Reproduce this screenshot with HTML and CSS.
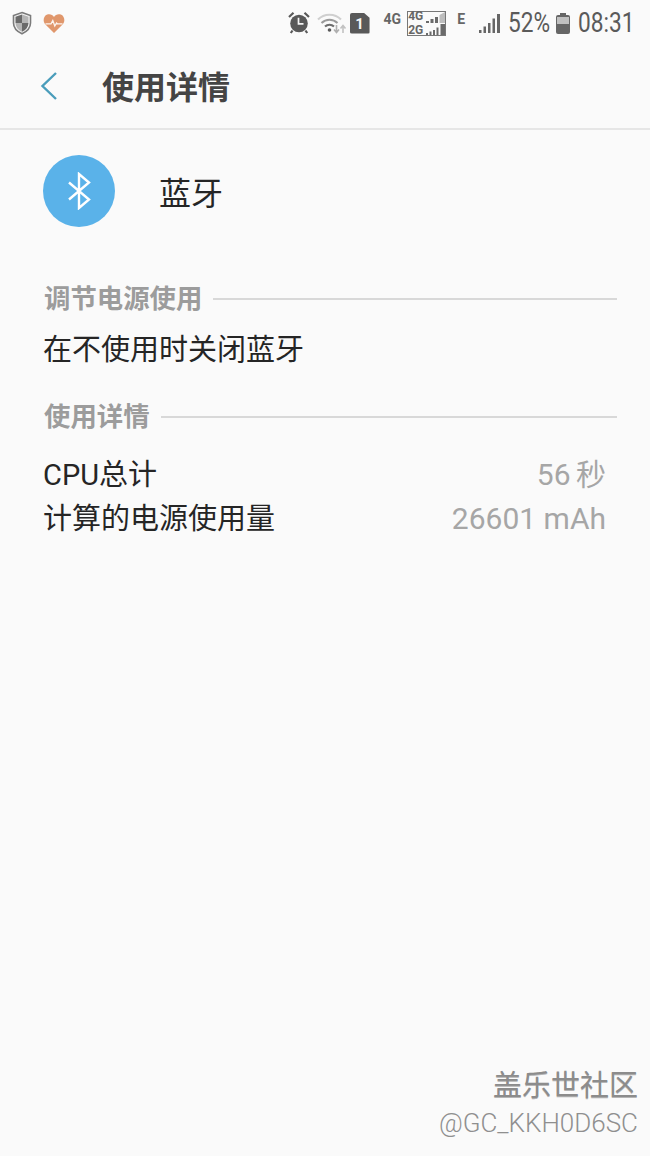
FILE: index.html
```html
<!DOCTYPE html>
<html lang="zh-CN">
<head>
  <meta charset="UTF-8">
  <meta name="viewport" content="width=device-width, initial-scale=1.0">
  <title>使用详情</title>
  <link rel="stylesheet" href="styles.css">
</head>
<body>
  <div class="phone">
    <!-- Status bar -->
    <div class="status-bar">
      <div class="status-left">
        <svg class="ic-shield" width="20" height="24" viewBox="0 0 20 24">
          <path d="M10 1.5 L18.5 4.5 V12 C18.5 17 15 20.5 10 22.8 C5 20.5 1.500 17 1.500 12 V4.500 Z" fill="#f2f2f2" stroke="#7b7b7b" stroke-width="1.600"/>
          <path d="M10 3.500 V12 H3.500 V5.800 Z" fill="#6a6a6a"/>
          <path d="M10 12 H16.500 C16.300 16 14 18.800 10 20.800 Z" fill="#6a6a6a"/>
          <path d="M10 3.500 L16.500 5.800 V12 H10 Z" fill="#b5b5b5"/>
          <path d="M10 12 V20.800 C6 18.800 3.700 16 3.500 12 Z" fill="#b5b5b5"/>
        </svg>
        <svg class="ic-heart" width="22" height="21" viewBox="0 0 22 21">
          <path d="M11 20 L2.200 11.300 C-0.500 8.300 0.500 2.800 4.200 1.500 C7 0.600 9.500 1.600 11 4 C12.500 1.600 15 0.600 17.800 1.500 C21.500 2.800 22.500 8.300 19.800 11.300 Z" fill="#e0976c"/>
          <path d="M2.500 10.800 H8 L9.800 7.500 L11.800 13 L13.500 10 L14.300 10.800 H19.500" fill="none" stroke="#fdf5ef" stroke-width="1.300"/>
        </svg>
      </div>
      <div class="status-right">
        <svg class="ic-alarm" width="22" height="24" viewBox="0 0 22 24">
          <circle cx="11" cy="12.500" r="8.800" fill="#595959"/>
          <path d="M10.500 6.800 V12.800 H15.500" fill="none" stroke="#f5f5f5" stroke-width="1.700"/>
          <path d="M1 6 L5.500 1.800 M21 6 L16.500 1.800 M4.500 19.500 L2.800 22 M17.500 19.500 L19.200 22" stroke="#595959" stroke-width="2.200" fill="none"/>
        </svg>
        <svg class="ic-wifi" width="30" height="24" viewBox="0 0 30 24">
          <path d="M1 8.500 C7 2 18 2 24 8.500" fill="none" stroke="#cfcfcf" stroke-width="2"/>
          <path d="M4.500 12 C9 7.500 16 7.500 20.500 12" fill="none" stroke="#9a9a9a" stroke-width="2"/>
          <path d="M8 15.500 C10.500 13 14.500 13 17 15.500" fill="none" stroke="#6e6e6e" stroke-width="2"/>
          <circle cx="12.500" cy="19" r="1.800" fill="#595959"/>
          <path d="M19.500 14 V21 M17 18.500 L19.500 21.500 L22 18.500" fill="none" stroke="#b0b0b0" stroke-width="1.600"/>
          <path d="M26 22 V15 M23.500 17.500 L26 14.500 L28.500 17.500" fill="none" stroke="#c2c2c2" stroke-width="1.600"/>
        </svg>
        <div class="sim">1</div>
        <span class="net-label net-4g">4G</span>
        <div class="dual-net">
          <div class="dual-labels">
            <span>4G</span>
            <span>2G</span>
          </div>
          <div class="dual-bars">
            <svg width="19" height="11" viewBox="0 0 19 11"><path d="M0 11 H3 V9 H0 Z M4.500 11 H7.500 V7 H4.500 Z M9 11 H12 V5 H9 Z" fill="#6a6a6a"/><path d="M13.500 11 H19 V0 L13.500 3 Z" fill="#bdbdbd"/></svg>
            <svg width="19" height="11" viewBox="0 0 19 11"><path d="M0 11 H2 V9 H0 Z M3.500 11 H5.500 V7.500 H3.500 Z M7 11 H9 V6 H7 Z M10.500 11 H12.500 V3.500 H10.500 Z M14.500 11 H19 V0 H14.500 Z" fill="#6a6a6a"/></svg>
          </div>
        </div>
        <span class="net-label net-e">E</span>
        <svg class="ic-signal" width="22" height="21" viewBox="0 0 22 21">
          <path d="M0 20 H2.500 V17 H0 Z M4.500 20 H7 V13.500 H4.500 Z M9 20 H11.500 V10 H9 Z M13.500 20 H16 V5.500 H13.500 Z M18 20 H21 V1 H18 Z" fill="#666"/>
        </svg>
        <span class="battery-pct">52%</span>
        <div class="battery"><div class="battery-empty"></div></div>
        <span class="clock">08:31</span>
      </div>
    </div>

    <!-- Title bar -->
    <div class="title-bar">
      <svg class="back" width="18" height="30" viewBox="0 0 18 30">
        <path d="M16 2 L2.500 15 L16 28" fill="none" stroke="#4a9dbb" stroke-width="2.400"/>
      </svg>
      <h1>使用详情</h1>
    </div>

    <!-- App row -->
    <div class="app-row">
      <div class="app-icon">
        <svg width="26" height="38" viewBox="0 0 26 38">
          <path d="M3 10.500 L23 27.500 L13 36 V2 L23 10.500 L3 27.500" fill="none" stroke="#fff" stroke-width="2.400"/>
        </svg>
      </div>
      <div class="app-name">蓝牙</div>
    </div>

    <!-- Power section -->
    <div class="section section-power">
      <span class="section-title">调节电源使用</span>
      <span class="section-line"></span>
    </div>
    <div class="tip">在不使用时关闭蓝牙</div>

    <div class="section section-detail">
      <span class="section-title">使用详情</span>
      <span class="section-line"></span>
    </div>
    <div class="details">
      <div class="detail-row"><span>CPU总计</span><span class="value value-time">56 秒</span></div>
      <div class="detail-row"><span>计算的电源使用量</span><span class="value">26601 mAh</span></div>
    </div>

    <div class="watermark">
      <div class="wm-name">盖乐世社区</div>
      <div class="wm-user">@GC_KKH0D6SC</div>
    </div>
  </div>
</body>
</html>
```
FILE: styles.css
```css
* {
  box-sizing: border-box;
}
html, body {
  margin: 0;
  padding: 0;
}
body {
  font-family: "Roboto", "Noto Sans CJK SC", sans-serif;
  background-color: #fafafa;
  color: #252525;
}
.phone {
  width: 650px;
  height: 1156px;
  position: relative;
  overflow: hidden;
  background-color: #fafafa;
}

/* status bar */
.status-bar {
  height: 46px;
  display: flex;
  justify-content: space-between;
  align-items: center;
  padding: 0 17px 0 12px;
  color: #5a5a5a;
}
.status-left, .status-right {
  display: flex;
  align-items: center;
}
.ic-heart {
  margin-left: 11px;
}
.ic-wifi {
  margin-left: 7px;
}
.sim {
  width: 20px;
  height: 21px;
  margin-left: 3px;
  background-color: #595959;
  color: #f5f5f5;
  font-size: 15px;
  font-weight: 700;
  line-height: 22px;
  text-align: center;
  border-radius: 2px;
  clip-path: polygon(0 0, 70% 0, 100% 25%, 100% 100%, 0 100%);
}
.net-label {
  font-size: 14px;
  line-height: 14px;
  font-weight: 700;
  color: #666;
}
.net-4g {
  margin: -8px 0 0 14px;
}
.dual-net {
  width: 39px;
  height: 25px;
  margin-left: 6px;
  border: 1px solid #777;
  display: flex;
  justify-content: space-between;
}
.dual-labels {
  height: 23px;
  display: flex;
  flex-direction: column;
  justify-content: center;
  font-size: 12px;
  font-weight: 700;
  color: #666;
}
.dual-labels span {
  flex: none;
  height: 14.200px;
  line-height: 14.200px;
}
.dual-bars {
  display: flex;
  flex-direction: column;
  gap: 1px;
}
.net-e {
  margin: -8px 0 0 11px;
}
.ic-signal {
  margin-left: 14px;
}
/* the system digits are taller and narrower than Roboto, so squeeze them */
.battery-pct, .clock {
  display: inline-block;
  font-size: 27px;
  line-height: 30px;
  white-space: nowrap;
  transform: scaleX(0.84);
  transform-origin: left center;
}
.battery-pct {
  width: 42px;
  margin-left: 7px;
}
.battery {
  width: 14px;
  height: 19px;
  margin: 2px 0 0 6px;
  background-color: #666;
  border-radius: 2px;
  padding-top: 2px;
  position: relative;
}
.battery::before {
  content: "";
  position: absolute;
  top: -2px;
  left: 4px;
  width: 6px;
  height: 2px;
  background-color: #666;
}
.battery-empty {
  height: 7px;
  margin: 0 1px;
  background-color: #c0c0c0;
}
.clock {
  width: 55px;
  margin-left: 8px;
}

/* title bar */
.title-bar {
  height: 84px;
  display: flex;
  align-items: center;
  padding: 0 0 2px 40px;
  border-bottom: 2px solid #e6e6e6;
}
.back {
  flex: none;
}
h1 {
  margin: 0 0 2px 44px;
  font-size: 32px;
  font-weight: 700;
  color: #444;
}

/* app row */
.app-row {
  display: flex;
  align-items: center;
  padding: 25px 0 0 43px;
}
.app-icon {
  width: 72px;
  height: 72px;
  border-radius: 50%;
  background-color: #5ab2e9;
  display: flex;
  align-items: center;
  justify-content: center;
}
.app-name {
  margin: 5px 0 0 44px;
  font-size: 32px;
  line-height: 40px;
}

/* sections */
.section {
  display: flex;
  align-items: center;
  padding: 0 33px 0 44px;
}
.section-power {
  margin-top: 57px;
}
.section-detail {
  margin-top: 35px;
}
.section-title {
  font-size: 26.400px;
  line-height: 30px;
  font-weight: 700;
  color: #9c9c9c;
}
.section-line {
  flex: 1;
  height: 2px;
  margin-left: 11px;
  background-color: #d8d8d8;
}
.tip {
  margin: 19px 0 0 43px;
  font-size: 29px;
  line-height: 34px;
}
.details {
  margin-top: 21px;
  padding: 0 44px 0 43px;
}
.detail-row {
  display: flex;
  justify-content: space-between;
  font-size: 29px;
  line-height: 44px;
}
.value {
  font-size: 30px;
  color: #a6a6a6;
}
.value-time {
  word-spacing: -2px;
}

/* community watermark over the page corner */
.watermark {
  position: absolute;
  right: 12px;
  bottom: 15px;
  text-align: right;
}
.wm-name {
  font-size: 29px;
  line-height: 37px;
  font-weight: 400;
  color: #8c8c8c;
  text-shadow: 0 1px 0 #b5b5b5;
}
.wm-user {
  font-size: 26px;
  line-height: 36px;
  font-weight: 300;
  color: #8f8f8f;
}
```
